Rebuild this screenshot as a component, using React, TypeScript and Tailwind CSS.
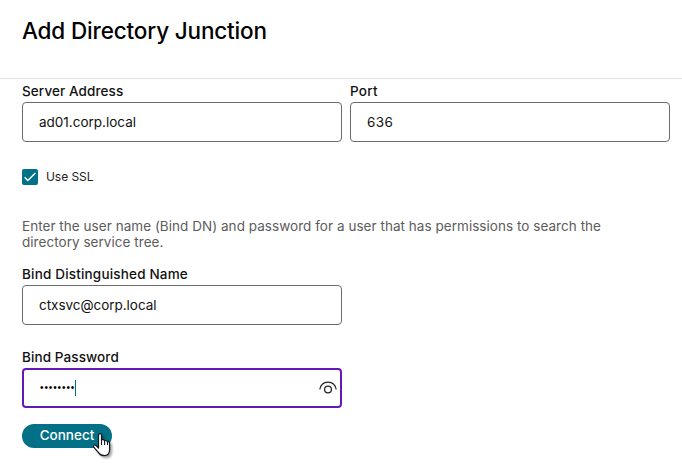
import { useState } from "react";
import clsx from "clsx";

type FieldProps = {
  label: string;
  labelClassName?: string;
  value: string;
  valueClassName?: string;
};

function Field({ label, labelClassName, value, valueClassName }: FieldProps) {
  return (
    <div className="w-80">
      <div className="flex h-[22px] items-center text-[13.5px] leading-4 font-medium text-[#111]">
        <span className={labelClassName}>{label}</span>
      </div>
      <div className="flex h-10 items-center rounded-[4px] border border-[#6b6b6b] bg-white px-4 text-[13.5px] text-[#111]">
        <span className={valueClassName}>{value}</span>
      </div>
    </div>
  );
}

function PasswordField({ focused }: { focused: boolean }) {
  return (
    <div className="w-80">
      <div className="flex h-[22px] items-center text-[13.5px] leading-4 font-medium text-[#111]">
        <span className="tracking-[0.1px]">Bind Password</span>
      </div>
      <div
        className={clsx(
          "flex h-10 items-center rounded-[4px] bg-white pr-[3px] pl-4",
          focused ? "border-2 border-[#6319b5]" : "border border-[#6b6b6b]"
        )}
      >
        <span className="font-['Liberation_Sans',sans-serif] text-[10px] leading-4 tracking-[0.9px] text-black">
          ••••••••
        </span>
        {focused && <span className="h-4 w-px bg-[#027086]" />}
        <svg
          className="ml-auto"
          width="18"
          height="14"
          viewBox="0 0 18 14"
          fill="none"
          stroke="#222"
          strokeWidth="1.25"
        >
          <path d="M.8 8.5C1.6 4.2 4.8 1.2 9 1.2s7.4 3 8.2 7.3" />
          <circle cx="9" cy="8.5" r="3.4" />
        </svg>
      </div>
    </div>
  );
}

function HandCursor() {
  return (
    <svg
      className="absolute top-[8px] left-[70px] drop-shadow-[2px_2px_1px_rgba(0,0,0,0.35)]"
      width="20"
      height="26"
      viewBox="0 0 20 26"
    >
      <path
        d="M6.5 16V3.5C6.5 1 9.5 1 9.5 3.5V8.2C10.2 7.4 12.4 7.4 12.6 8.9C13.5 8.2 15.4 8.4 15.5 9.9C16.5 9.2 17.6 9.8 17.6 11.4V17.5C17.6 21.5 15.5 23.6 12 23.6C9.3 23.6 7.8 22.6 6.3 20.3L1.8 15.2C.9 13.6 2.6 12.3 4.1 13.5Z"
        fill="white"
        stroke="#15151f"
        strokeWidth="1.2"
        strokeLinejoin="round"
      />
      <path d="M9.5 8.2v4.8M12.6 8.9v4.1M15.5 9.9v3.1" stroke="#15151f" strokeWidth="1.1" />
    </svg>
  );
}

export default function App() {
  const [useSsl, setUseSsl] = useState(true);

  return (
    <div className="h-[475px] w-[682px] overflow-hidden bg-white font-['Inter',sans-serif]">
      <header className="flex h-[79px] items-start border-b border-[#e2e2e2] px-[22px] pt-[15px]">
        <h1 className="text-[22.5px] leading-8 font-medium tracking-[-0.16px] text-black">
          Add Directory Junction
        </h1>
      </header>

      <main className="px-[22px] pt-px">
        <div className="flex w-[648px] gap-2">
          <Field
            label="Server Address"
            labelClassName="tracking-[0.1px]"
            value="ad01.corp.local"
          />
          <Field
            label="Port"
            labelClassName="tracking-[0.25px]"
            value="636"
            valueClassName="tracking-[0.4px]"
          />
        </div>

        <button
          onClick={() => setUseSsl(!useSsl)}
          className="mt-[27px] flex h-4 items-center gap-2"
        >
          <span
            className={clsx(
              "flex size-4 items-center justify-center rounded-[2px]",
              useSsl ? "bg-[#027086]" : "border border-[#6b6b6b]"
            )}
          >
            {useSsl && (
              <svg width="12" height="10" viewBox="0 0 12 10" fill="none">
                <path d="M.6 5.2l3.2 3.3L11.4 1" stroke="white" strokeWidth="1.3" />
              </svg>
            )}
          </span>
          <span className="text-[12px] leading-4 tracking-[-0.06px] text-[#222]">Use SSL</span>
        </button>

        <p className="mt-[33px] text-[13.5px] leading-4 tracking-[0.04px] text-[#5c5c5c]">
          Enter the user name (Bind DN) and password for a user that has permissions to search the
          <br />
          directory service tree.
        </p>

        <div className="mt-[13px]">
          <Field
            label="Bind Distinguished Name"
            labelClassName="tracking-[0.18px]"
            value="ctxsvc@corp.local"
            valueClassName="tracking-[-0.03px]"
          />
        </div>

        <div className="mt-[21px]">
          <PasswordField focused />
        </div>

        <div className="relative mt-4 w-[90px]">
          <button className="flex h-6 w-full items-center justify-center rounded-full bg-[#027086] pb-0.5 text-[13.5px] leading-4 font-medium text-white">
            Connect
          </button>
          <HandCursor />
        </div>
      </main>
    </div>
  );
}
